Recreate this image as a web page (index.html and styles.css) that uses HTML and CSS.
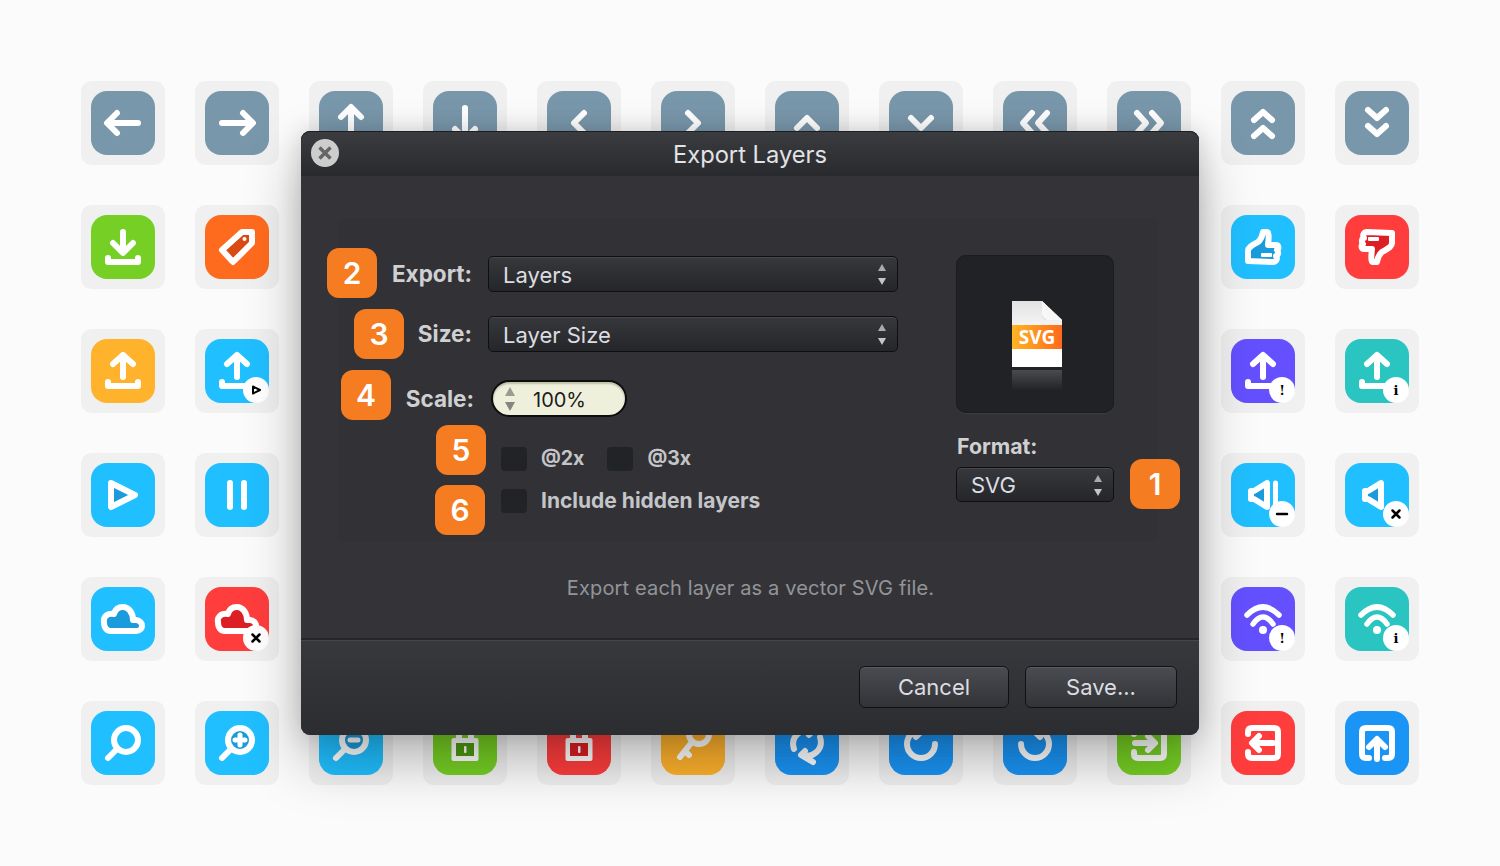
FILE: index.html
```html
<!DOCTYPE html>
<html lang="en">
  <head>
    <meta charset="UTF-8" />
    <title>Export Layers</title>
    <link rel="stylesheet" href="styles.css">
  </head>
  <body>
    <svg class="defs" aria-hidden="true">
      <symbol id="arrow-left" viewBox="0 0 64 64"><path d="M17 32H47M26 22L16 32L26 42"/></symbol>
      <symbol id="arrow-right" viewBox="0 0 64 64"><path d="M17 32H47M38 22L48 32L38 42"/></symbol>
      <symbol id="arrow-up" viewBox="0 0 64 64"><path d="M32 17V47M22 26L32 16L42 26"/></symbol>
      <symbol id="arrow-down" viewBox="0 0 64 64"><path d="M32 17V47M22 38L32 48L42 38"/></symbol>
      <symbol id="chev-left" viewBox="0 0 64 64"><path d="M37 22L27 32L37 42"/></symbol>
      <symbol id="chev-right" viewBox="0 0 64 64"><path d="M27 22L37 32L27 42"/></symbol>
      <symbol id="chev-up" viewBox="0 0 64 64"><path d="M22 37L32 27L42 37"/></symbol>
      <symbol id="chev-down" viewBox="0 0 64 64"><path d="M22 27L32 37L42 27"/></symbol>
      <symbol id="dbl-left" viewBox="0 0 64 64"><path d="M29 22L20 32L29 42M44 22L35 32L44 42"/></symbol>
      <symbol id="dbl-right" viewBox="0 0 64 64"><path d="M20 22L29 32L20 42M35 22L44 32L35 42"/></symbol>
      <symbol id="dbl-up" viewBox="0 0 64 64"><path d="M23 29L32 21L41 29M23 45L32 37L41 45"/></symbol>
      <symbol id="dbl-down" viewBox="0 0 64 64"><path d="M23 19L32 27L41 19M23 35L32 43L41 35"/></symbol>
      <symbol id="download" viewBox="0 0 64 64"><path d="M32 17V37M22 28L32 38L42 28M17 43V47H47V43"/></symbol>
      <symbol id="upload" viewBox="0 0 64 64"><path d="M32 17V38M22 25L32 16L42 25M17 43V47H47V43"/></symbol>
      <symbol id="tag" viewBox="0 0 64 64">
        <path fill="currentColor" d="M37 17H47V28L28 47L17 35Z"/>
        <circle cx="39.500" cy="24" r="2" fill="#fff" stroke="none"/>
      </symbol>
      <symbol id="play" viewBox="0 0 64 64"><path fill="currentColor" d="M20 20L44 32L20 44Z"/></symbol>
      <symbol id="pause" viewBox="0 0 64 64"><path d="M25 20V44M39 20V44"/></symbol>
      <symbol id="cloud" viewBox="0 0 64 64"><path fill="currentColor" d="M20 44H45C53 44 53 34 45 33H42C42 25 37 20 32 20C27 20 24 23 23 27C15 26 12 31 13 35C13 41 16 44 20 44Z"/></symbol>
      <symbol id="search" viewBox="0 0 64 64"><circle cx="35" cy="29" r="12"/><path d="M26 38L17 47"/></symbol>
      <symbol id="search-plus" viewBox="0 0 64 64"><circle cx="35" cy="29" r="12" fill="currentColor"/><path d="M26 38L17 47"/><path stroke-width="5" d="M30 29H40M35 24V34"/></symbol>
      <symbol id="search-minus" viewBox="0 0 64 64"><circle cx="35" cy="29" r="12" fill="currentColor"/><path d="M26 38L17 47"/><path stroke-width="5" d="M31 29H39"/></symbol>
      <symbol id="lock" viewBox="0 0 64 64">
        <path d="M26 28V20C26 12 38 12 38 20V28"/>
        <rect x="18.500" y="27" width="27" height="23" rx="2" fill="#fff" stroke="none"/>
        <rect x="23" y="32" width="18" height="13" fill="currentColor" stroke="none"/>
        <rect x="31" y="35" width="2.500" height="7" rx="1" fill="#fff" stroke="none"/>
      </symbol>
      <symbol id="key" viewBox="0 0 64 64"><circle cx="38" cy="23" r="10"/><path d="M31 31L19 46M24 40L28 44"/></symbol>
      <symbol id="sync" viewBox="0 0 64 64"><path d="M19 38C15 26 26 16 38 20M26 13L38 20L34 24M45 26C49 38 38 48 26 44M38 51L26 44L30 40"/></symbol>
      <symbol id="rotate-right" viewBox="0 0 64 64"><path d="M46 33A14 14 0 1 1 32 19M27 12L34 19L27 26"/></symbol>
      <symbol id="rotate-left" viewBox="0 0 64 64"><path d="M18 33A14 14 0 1 0 32 19M37 12L30 19L37 26"/></symbol>
      <symbol id="log-in" viewBox="0 0 64 64"><path d="M17 23V21Q17 17 21 17H43Q47 17 47 21V43Q47 47 43 47H21Q17 47 17 43V41M18 32H37M31 25L38 32L31 39"/></symbol>
      <symbol id="log-out" viewBox="0 0 64 64"><path d="M17 23V21Q17 17 21 17H43Q47 17 47 21V43Q47 47 43 47H21Q17 47 17 43V41M42 32H22M28 25L21 32L28 39"/></symbol>
      <symbol id="share" viewBox="0 0 64 64"><path d="M24 47H21Q17 47 17 43V21Q17 17 21 17H43Q47 17 47 21V43Q47 47 43 47H40M32 48V30M24 36L32 28L40 36"/></symbol>
      <symbol id="thumb" viewBox="0 0 64 64">
        <path fill="currentColor" d="M17 46V36C17 32 22 30 27 27C31 24 31 21 32 17H36C38 17 38 22 37 30H45C48 30 48 34 46 35C48 37 47 41 45 41C47 44 45 47 42 47Z"/>
        <rect x="30" y="38" width="11" height="4" rx="1" fill="#fff" stroke="none"/>
      </symbol>
      <symbol id="speaker" viewBox="0 0 64 64"><path fill="currentColor" d="M20 28H23L36 20V44L23 36H20Z"/></symbol>
      <symbol id="wifi" viewBox="0 0 64 64"><path stroke-width="5.500" d="M16 28Q32 12 48 28M22 37Q32 23 42 37"/><circle cx="32" cy="43" r="4" fill="#fff" stroke="none"/></symbol>
      <symbol id="badge-play" viewBox="0 0 64 64"><circle cx="51" cy="51" r="13" fill="#fff" stroke="none"/><path fill="none" stroke="#000" stroke-width="2" d="M48 47.500L55 51L48 54.500Z"/></symbol>
      <symbol id="badge-x" viewBox="0 0 64 64"><circle cx="51" cy="51" r="13" fill="#fff" stroke="none"/><path stroke="#000" stroke-width="2.500" d="M47.500 47.500L54.500 54.500M54.500 47.500L47.500 54.500"/></symbol>
      <symbol id="badge-minus" viewBox="0 0 64 64"><circle cx="51" cy="51" r="13" fill="#fff" stroke="none"/><path stroke="#000" stroke-width="2.500" d="M46 51H56"/></symbol>
      <symbol id="badge-alert" viewBox="0 0 64 64"><circle cx="51" cy="51" r="13" fill="#fff" stroke="none"/><text x="51" y="56" class="badge-text">!</text></symbol>
      <symbol id="badge-info" viewBox="0 0 64 64"><circle cx="51" cy="51" r="13" fill="#fff" stroke="none"/><text x="51" y="56" class="badge-text">i</text></symbol>
    </svg>

    <div class="grid">
      <div class="tile"><svg class="icon steel"><use href="#arrow-left"/></svg></div>
      <div class="tile"><svg class="icon steel"><use href="#arrow-right"/></svg></div>
      <div class="tile"><svg class="icon steel"><use href="#arrow-up"/></svg></div>
      <div class="tile"><svg class="icon steel"><use href="#arrow-down"/></svg></div>
      <div class="tile"><svg class="icon steel"><use href="#chev-left"/></svg></div>
      <div class="tile"><svg class="icon steel"><use href="#chev-right"/></svg></div>
      <div class="tile"><svg class="icon steel"><use href="#chev-up"/></svg></div>
      <div class="tile"><svg class="icon steel"><use href="#chev-down"/></svg></div>
      <div class="tile"><svg class="icon steel"><use href="#dbl-left"/></svg></div>
      <div class="tile"><svg class="icon steel"><use href="#dbl-right"/></svg></div>
      <div class="tile"><svg class="icon steel"><use href="#dbl-up"/></svg></div>
      <div class="tile"><svg class="icon steel"><use href="#dbl-down"/></svg></div>

      <div class="tile"><svg class="icon green"><use href="#download"/></svg></div>
      <div class="tile"><svg class="icon orange"><use href="#tag"/></svg></div>
      <div class="covered"></div>
      <div class="tile"><svg class="icon sky"><use href="#thumb"/></svg></div>
      <div class="tile"><svg class="icon red"><use class="flipped" href="#thumb"/></svg></div>

      <div class="tile"><svg class="icon amber"><use href="#upload"/></svg></div>
      <div class="tile"><svg class="icon sky"><use href="#upload"/><use href="#badge-play"/></svg></div>
      <div class="tile"><svg class="icon purple"><use href="#upload"/><use href="#badge-alert"/></svg></div>
      <div class="tile"><svg class="icon teal"><use href="#upload"/><use href="#badge-info"/></svg></div>

      <div class="tile"><svg class="icon sky"><use href="#play"/></svg></div>
      <div class="tile"><svg class="icon sky"><use href="#pause"/></svg></div>
      <div class="tile"><svg class="icon sky"><use href="#speaker"/><path class="thin" d="M44.500 20V44"/><use href="#badge-minus"/></svg></div>
      <div class="tile"><svg class="icon sky"><use href="#speaker"/><use href="#badge-x"/></svg></div>

      <div class="tile"><svg class="icon sky"><use href="#cloud"/></svg></div>
      <div class="tile"><svg class="icon red"><use href="#cloud"/><use href="#badge-x"/></svg></div>
      <div class="tile"><svg class="icon purple"><use href="#wifi"/><use href="#badge-alert"/></svg></div>
      <div class="tile"><svg class="icon teal"><use href="#wifi"/><use href="#badge-info"/></svg></div>

      <div class="tile"><svg class="icon sky"><use href="#search"/></svg></div>
      <div class="tile"><svg class="icon sky"><use href="#search-plus"/></svg></div>
      <div class="tile"><svg class="icon sky"><use href="#search-minus"/></svg></div>
      <div class="tile"><svg class="icon green"><use href="#lock"/></svg></div>
      <div class="tile"><svg class="icon red"><use href="#lock"/></svg></div>
      <div class="tile"><svg class="icon amber"><use href="#key"/></svg></div>
      <div class="tile"><svg class="icon blue"><use href="#sync"/></svg></div>
      <div class="tile"><svg class="icon blue"><use href="#rotate-right"/></svg></div>
      <div class="tile"><svg class="icon blue"><use href="#rotate-left"/></svg></div>
      <div class="tile"><svg class="icon green"><use href="#log-in"/></svg></div>
      <div class="tile"><svg class="icon red"><use href="#log-out"/></svg></div>
      <div class="tile"><svg class="icon blue"><use href="#share"/></svg></div>
    </div>

    <div class="dialog">
      <div class="titlebar">
        <div class="closeBtn">
          <svg width="16" height="16" viewBox="0 0 16 16"><path d="M2.500 2.500L13.500 13.500M13.500 2.500L2.500 13.500"/></svg>
        </div>
        <h1 class="title">Export Layers</h1>
      </div>

      <div class="main">
        <div class="panel">
          <div class="form">
            <div class="row">
              <label class="fieldLabel">Export:</label>
              <div class="select wide">Layers<span class="updown"></span></div>
            </div>
            <div class="row">
              <label class="fieldLabel">Size:</label>
              <div class="select wide">Layer Size<span class="updown"></span></div>
            </div>
            <div class="row scaleRow">
              <label class="fieldLabel">Scale:</label>
              <div class="stepper"><span class="updown"></span>100%</div>
            </div>
            <div class="checks firstChecks">
              <span class="checkbox"></span><span class="checkLabel scaleOpt">@2x</span>
              <span class="checkbox second"></span><span class="checkLabel scaleOpt">@3x</span>
            </div>
            <div class="checks">
              <span class="checkbox"></span><span class="checkLabel">Include hidden layers</span>
            </div>
          </div>

          <div class="side">
            <div class="preview">
              <svg width="50" height="90" viewBox="0 0 50 90">
                <defs>
                  <linearGradient id="bandFill" x1="0" y1="0" x2="1" y2="0">
                    <stop offset="0" stop-color="#ffb522"/>
                    <stop offset="1" stop-color="#ff6a1c"/>
                  </linearGradient>
                  <linearGradient id="sheetFill" x1="0" y1="0" x2="0" y2="1">
                    <stop offset="0" stop-color="#e2e2e2"/>
                    <stop offset="1" stop-color="#f4f4f4"/>
                  </linearGradient>
                  <linearGradient id="mirrorFill" x1="0" y1="0" x2="0" y2="1">
                    <stop offset="0" stop-color="#4a4b4f"/>
                    <stop offset="1" stop-color="#202125"/>
                  </linearGradient>
                </defs>
                <path fill="url(#sheetFill)" d="M0 0H30L50 19V24H0Z"/>
                <path fill="#bdbdbd" d="M30 0L50 19H36Q30 19 30 13Z"/>
                <path fill="#f7f7f7" d="M30 0L50 19H35Q31 18 30 14Z"/>
                <rect y="24" width="50" height="24" fill="url(#bandFill)"/>
                <rect y="48" width="50" height="18" fill="#fff"/>
                <rect y="69" width="50" height="21" fill="url(#mirrorFill)"/>
                <text x="25" y="43" class="sheetText">SVG</text>
              </svg>
            </div>
            <div class="formatLabel">Format:</div>
            <div class="select narrow">SVG<span class="updown"></span></div>
          </div>
        </div>
        <p class="note">Export each layer as a vector SVG file.</p>
      </div>

      <div class="footer">
        <button class="btn cancel">Cancel</button>
        <button class="btn save">Save...</button>
      </div>

      <div class="badge b1">1</div>
      <div class="badge b2">2</div>
      <div class="badge b3">3</div>
      <div class="badge b4">4</div>
      <div class="badge b5">5</div>
      <div class="badge b6">6</div>
    </div>
  </body>
</html>
```
FILE: styles.css
```css
body {
  margin: 0;
  height: 866px;
  position: relative;
  overflow: hidden;
  background-color: #fbfbfb;
  font-family: Inter, "Liberation Sans", sans-serif;
}
.defs {
  display: none;
}
.grid {
  display: grid;
  grid-template-columns: repeat(12, 84px);
  grid-auto-rows: 84px;
  column-gap: 30px;
  row-gap: 40px;
  padding: 81px;
}
.covered {
  grid-column: 3 / 11;
  grid-row: 2 / 6;
}
.tile {
  display: flex;
  align-items: center;
  justify-content: center;
  background-color: #f0f0f0;
  border-radius: 11px;
}
.icon {
  width: 64px;
  height: 64px;
  overflow: visible;
  border-radius: 16px;
  fill: none;
  stroke: #fff;
  stroke-width: 6;
  stroke-linecap: round;
  stroke-linejoin: round;
}
.icon .thin {
  stroke-width: 5;
}
.flipped {
  transform: rotate(180deg);
  transform-origin: 32px 32px;
}
.steel { background-color: #7997ab; color: #7997ab; }
.green { background-color: #76cf24; color: #4c9a10; }
.orange { background-color: #ff6b1e; color: #d94a14; }
.amber { background-color: #ffb22c; color: #ffb22c; }
.sky { background-color: #20bfff; color: #1a9bdc; }
.red { background-color: #ff3d3d; color: #dc1f24; }
.purple { background-color: #6450ff; color: #6450ff; }
.teal { background-color: #2ac5c1; color: #2ac5c1; }
.blue { background-color: #1a94f5; color: #1a94f5; }
.badge-text {
  font-family: "DejaVu Serif", serif;
  font-size: 13px;
  font-weight: 700;
  text-anchor: middle;
  fill: #000;
  stroke: none;
}

.dialog {
  position: absolute;
  left: 301px;
  top: 131px;
  width: 898px;
  height: 604px;
  display: flex;
  flex-direction: column;
  border-radius: 9px;
  background-color: #343438;
  box-shadow: 0 26px 56px rgba(0, 0, 0, 0.28), 0 0 24px rgba(0, 0, 0, 0.14);
  color: #dcdde0;
}
.titlebar {
  position: relative;
  flex: none;
  height: 45px;
  display: flex;
  align-items: center;
  justify-content: center;
  box-sizing: border-box;
  border-radius: 9px 9px 0 0;
  border-bottom: 2px solid #28292c;
  background: linear-gradient(#3b3c40, #2a2b2e);
  box-shadow: inset 0 1px 0 #1e1e21;
}
.title {
  margin: 4px 0 0;
  font-size: 23.700px;
  font-weight: 400;
  color: #e2e3e6;
}
.closeBtn {
  position: absolute;
  left: 10px;
  top: 8px;
  width: 28px;
  height: 28px;
  display: flex;
  align-items: center;
  justify-content: center;
  border-radius: 50%;
  background-color: #cdcdcd;
}
.closeBtn path {
  fill: none;
  stroke: #666;
  stroke-width: 3.5;
}
.main {
  flex: 1;
  padding: 42px 41px 0 37px;
}
.panel {
  height: 324px;
  box-sizing: border-box;
  display: flex;
  gap: 58px;
  padding: 37px 0 0 16px;
  border-radius: 8px;
  background-color: #323236;
}
.form {
  display: flex;
  flex-direction: column;
  padding-top: 1px;
  padding-left: 118px;
}
.row {
  display: flex;
  align-items: center;
  gap: 16px;
  margin-left: -118px;
  margin-bottom: 24px;
}
.fieldLabel {
  width: 118px;
  margin-top: -2px;
  text-align: right;
  font-size: 22.500px;
  font-weight: 700;
  color: #cfd0d2;
}
.scaleRow {
  margin-top: 4px;
  margin-bottom: 30px;
}
.scaleRow .fieldLabel {
  margin-top: 0;
  margin-right: 3px;
  transform: translate(2px, 0);
}
.select {
  position: relative;
  box-sizing: border-box;
  height: 36px;
  display: flex;
  align-items: center;
  padding-left: 14px;
  padding-top: 2px;
  border: 1px solid #0f0f12;
  border-radius: 5px;
  background: linear-gradient(#37383c, #25262a);
  box-shadow: inset 0 1px 0 #47484c;
  font-size: 22px;
  color: #dcdde0;
}
.wide {
  width: 410px;
}
.narrow {
  width: 158px;
  height: 35px;
  padding-top: 0;
}
.updown {
  position: absolute;
  right: 11px;
  top: 50%;
  width: 8px;
  height: 21px;
  margin-top: -10px;
}
.updown::before,
.updown::after {
  content: "";
  position: absolute;
  left: 0;
  border-left: 4px solid transparent;
  border-right: 4px solid transparent;
}
.updown::before {
  top: 0;
  border-bottom: 7px solid #a9aaad;
}
.updown::after {
  bottom: 0;
  border-top: 7px solid #c4c5c8;
}
.stepper {
  position: relative;
  box-sizing: border-box;
  width: 136px;
  height: 37px;
  display: flex;
  align-items: center;
  padding-left: 40px;
  padding-top: 3px;
  border: 2px solid #0d0d0e;
  border-radius: 19px;
  background-color: #eef0dc;
  box-shadow: inset 0 2px 2px #bcbeac;
  font-size: 20px;
  color: #1c1c1c;
}
.stepper .updown {
  left: 12px;
  right: auto;
  width: 10px;
  height: 24px;
  margin-top: -12px;
}
.stepper .updown::before,
.stepper .updown::after {
  border-left-width: 5px;
  border-right-width: 5px;
}
.stepper .updown::before {
  border-bottom: 9px solid #9a9b92;
}
.stepper .updown::after {
  border-top: 9px solid #85867e;
}
.checks {
  display: flex;
  align-items: center;
  height: 24px;
  padding-left: 29px;
}
.firstChecks {
  margin-bottom: 18px;
}
.checkbox {
  width: 26px;
  height: 24px;
  margin-right: 14px;
  border-radius: 4px;
  background-color: #212327;
}
.checkbox.second {
  margin-left: 23px;
}
.checkLabel {
  margin-top: -2px;
  font-size: 21px;
  font-weight: 700;
  color: #c4c5c8;
}
.scaleOpt {
  font-size: 19.500px;
}
.side {
  width: 158px;
}
.preview {
  box-sizing: border-box;
  height: 158px;
  display: flex;
  justify-content: center;
  padding: 46px 0 0 4px;
  border-radius: 10px;
  background-color: #212226;
  box-shadow: inset 0 0 0 1px #1c1d20, 0 1px 0 #3d3e42;
}
.sheetText {
  font-family: "Open Sans", sans-serif;
  font-size: 19px;
  font-weight: 700;
  text-anchor: middle;
  fill: #fff;
}
.formatLabel {
  margin: 22px 0 10px 1px;
  font-size: 21.300px;
  line-height: 22px;
  font-weight: 700;
  color: #cfd0d2;
}
.note {
  margin: 34px -5px 0 0;
  text-align: center;
  font-size: 20px;
  line-height: 24px;
  letter-spacing: 0.16px;
  color: #939498;
}
.footer {
  flex: none;
  height: 97px;
  box-sizing: border-box;
  display: flex;
  justify-content: flex-end;
  gap: 16px;
  padding: 26px 22px 0 0;
  border-top: 2px solid #26272a;
  border-radius: 0 0 9px 9px;
  background: linear-gradient(#37383c, #2c2d30);
  box-shadow: inset 0 1px 0 #45464a;
}
.btn {
  height: 42px;
  border: 1px solid #111114;
  border-radius: 6px;
  background: linear-gradient(#4b4c51, #323337);
  box-shadow: inset 0 1px 0 #5a5b60;
  font-family: inherit;
  font-size: 22px;
  color: #dcdde0;
}
.cancel {
  width: 150px;
}
.save {
  width: 152px;
}
.badge {
  position: absolute;
  width: 50px;
  height: 50px;
  display: flex;
  align-items: center;
  justify-content: center;
  border-radius: 12px;
  background-color: #f57c20;
  font-size: 30px;
  font-weight: 600;
  color: #fff;
}
.b1 { left: 829px; top: 328px; }
.b2 { left: 26px; top: 117px; }
.b3 { left: 53px; top: 178px; }
.b4 { left: 40px; top: 239px; }
.b5 { left: 135px; top: 294px; }
.b6 { left: 134px; top: 354px; }
```
